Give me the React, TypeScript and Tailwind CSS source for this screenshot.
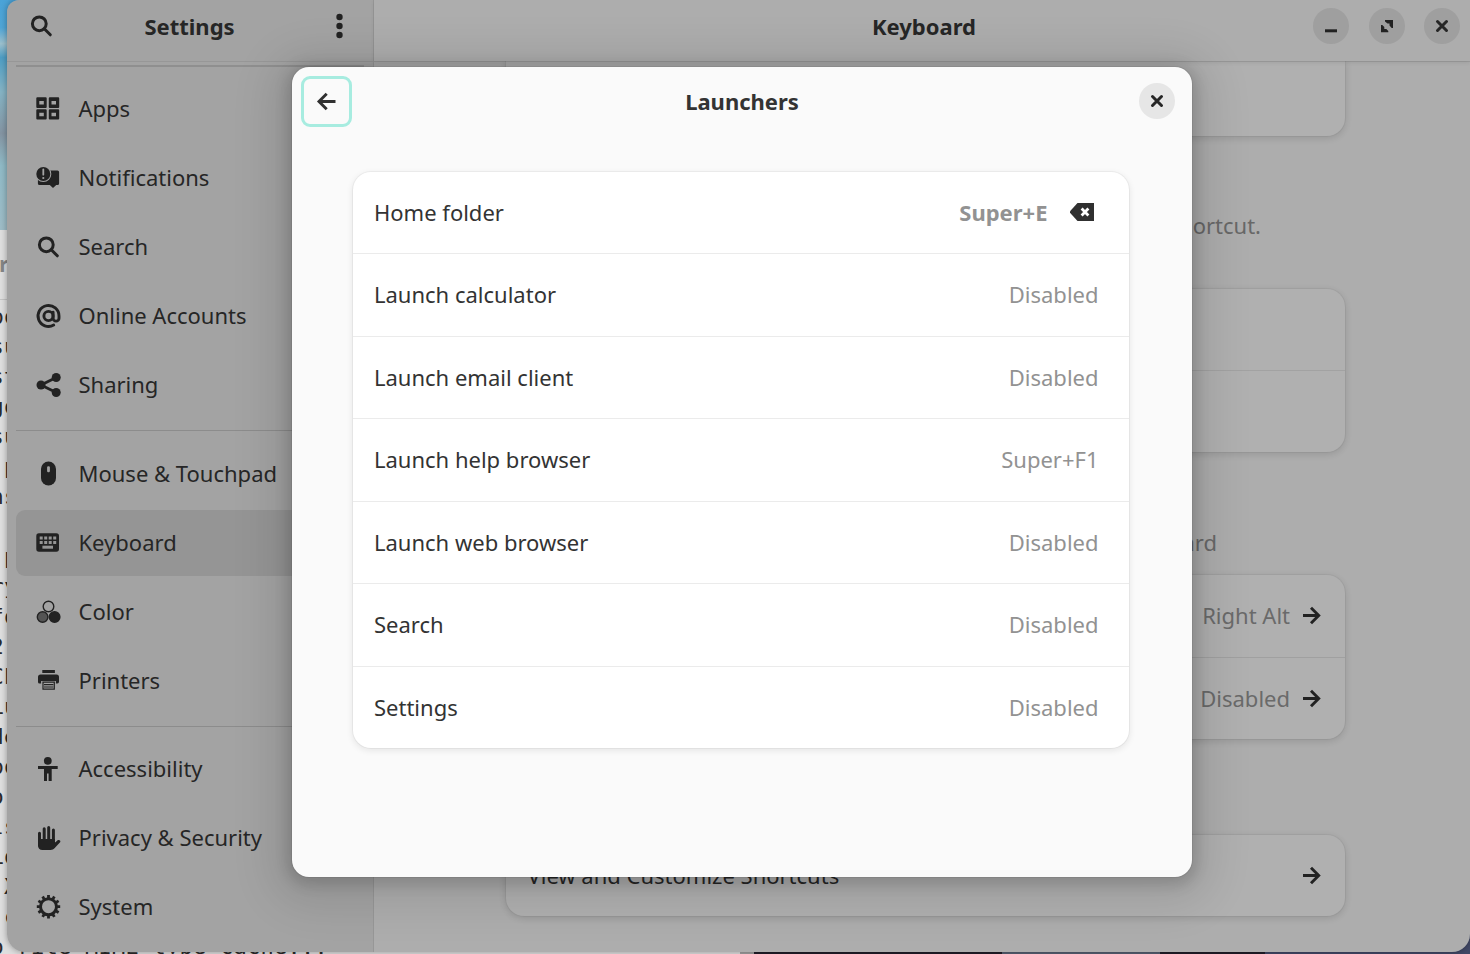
import React from "react";

const ink = "#222222";

const icons: Record<string, React.ReactNode> = {
  apps: (
    <path
      fill={ink}
      fillRule="evenodd"
      d="M1.300.3h8.400a1 1 0 0 1 1 1v8.600a1 1 0 0 1-1 1H1.300a1 1 0 0 1-1-1V1.300a1 1 0 0 1 1-1zM3.300 4v3.500h4.500V4zM13.800.3h8.400a1 1 0 0 1 1 1v8.600a1 1 0 0 1-1 1h-8.400a1 1 0 0 1-1-1V1.300a1 1 0 0 1 1-1zM15.500 4v3.500H20V4zM1.300 12.300h8.400a1 1 0 0 1 1 1v8.200a1 1 0 0 1-1 1H1.300a1 1 0 0 1-1-1v-8.200a1 1 0 0 1 1-1zM3.300 15.800v3.500h4.500v-3.500zM13.800 12.300h8.400a1 1 0 0 1 1 1v8.200a1 1 0 0 1-1 1h-8.400a1 1 0 0 1-1-1v-8.200a1 1 0 0 1 1-1zM15.500 15.800v3.500H20v-3.500z"
    />
  ),
  notifications: (
    <g>
      <path d="M2 4.500h19.500a1.600 1.600 0 0 1 1.600 1.600v11.400a1.600 1.600 0 0 1-1.600 1.600h-1.300l-3.200 3-3.200-3H3.500a1.600 1.600 0 0 1-1.600-1.600z" fill={ink} />
      <circle cx="7.300" cy="8" r="8" fill="#a3a3a3" />
      <circle cx="7.300" cy="8" r="7" fill={ink} />
      <path d="M7.300 3.500v5.200" stroke="#a3a3a3" strokeWidth="1.800" strokeLinecap="round" />
      <circle cx="7.300" cy="12" r="1.100" fill="#a3a3a3" />
    </g>
  ),
  search: (
    <g fill="none" stroke={ink} strokeWidth="3">
      <circle cx="10.300" cy="9.800" r="6.900" />
      <path d="M15.300 14.800l6 6" strokeLinecap="round" />
    </g>
  ),
  online: (
    <g fill="none" stroke={ink} strokeWidth="2.900">
      <circle cx="12.500" cy="12" r="4.600" />
      <path d="M17.100 8.200v6a2.900 2.900 0 0 0 5.900 0V12A10.500 10.500 0 1 0 17.700 21.100" strokeLinecap="round" />
    </g>
  ),
  sharing: (
    <g fill={ink}>
      <path d="M20.200 4.500L5 12l15.200 7.500" fill="none" stroke={ink} strokeWidth="2.800" />
      <circle cx="5" cy="12" r="4.500" />
      <circle cx="20.200" cy="4.500" r="4.500" />
      <circle cx="20.200" cy="19.500" r="4.500" />
    </g>
  ),
  mouse: (
    <g>
      <rect x="5" y="-.5" width="15" height="24" rx="7.500" fill={ink} />
      <rect x="11.100" y="4.300" width="2.800" height="6" rx="1.200" fill="#a3a3a3" />
    </g>
  ),
  keyboard: (
    <g>
      <rect x=".3" y="2.300" width="22.700" height="18.400" rx="2.600" fill={ink} />
      <path d="M3.700 6.900h16.500M3.700 11.600h16.500" stroke="#959595" strokeWidth="3" strokeDasharray="3 1.500" />
      <path d="M6.400 16.200H17" stroke="#959595" strokeWidth="3" />
    </g>
  ),
  color: (
    <g stroke={ink} strokeWidth="1.400">
      <circle cx="12.500" cy="6.500" r="5.300" fill="none" />
      <circle cx="6.600" cy="17" r="5.300" fill="#545454" />
      <circle cx="18.600" cy="17" r="5.300" fill={ink} />
    </g>
  ),
  printers: (
    <g fill={ink}>
      <path d="M6.300 1h12.600v3H6.300z" />
      <path d="M4.500 5.500h16A2.500 2.500 0 0 1 23 8v4.800a1.600 1.600 0 0 1-1.600 1.600h-1.500v-2.300H5.100v2.400H3.600A1.600 1.600 0 0 1 2 12.900V8a2.500 2.500 0 0 1 2.500-2.500z" />
      <path d="M7 13.200h11.300v7H7zM8 15.600h9.300M8 18h9.300" fill="#a3a3a3" stroke={ink} strokeWidth="1.200" />
    </g>
  ),
  accessibility: (
    <g fill={ink}>
      <circle cx="11.800" cy="3.800" r="3.900" />
      <path d="M2 9h19.700v3h-6v12H12.600v-7.500H11V24H8V12H2z" />
    </g>
  ),
  privacy: (
    <g fill={ink}>
      <path d="M3.500 7.300v12M8.200 2.800v12M12.700 1.500v12M17.400 4v14" stroke={ink} strokeWidth="3" strokeLinecap="round" />
      <path d="M2 13h16.900v3.600c1.300-.2 2-2 3.200-2.500 1.500-.5 3 .8 2 2.100L18.500 22.300c-1.200 1.300-2 1.700-4 1.700h-8C3.500 24 2 22 2 19.500z" />
    </g>
  ),
  system: (
    <g fill="none" stroke={ink} transform="translate(.5 -.3)">
      <circle cx="12" cy="12" r="8" strokeWidth="3" />
      <path
        d="M12 .3v3M12 20.700v3M.3 12h3M20.700 12h3M6.150 1.870l1.500 2.600M16.350 19.530l1.500 2.600M17.850 1.870l-1.500 2.600M7.650 19.530l-1.500 2.600M1.870 6.150l2.600 1.500M19.530 16.350l2.600 1.500M1.870 17.850l2.600-1.500M19.530 7.650l2.600-1.500"
        strokeWidth="2.800"
      />
    </g>
  ),
};

function Icon({ name }: { name: string }) {
  return (
    <svg width="24" height="24" viewBox="0 0 24 24" className="shrink-0 overflow-visible">
      {icons[name]}
    </svg>
  );
}

function ArrowRight() {
  return (
    <svg width="18" height="18" viewBox="0 0 18 18" className="shrink-0 overflow-visible">
      <path d="M0 8.500h15.500M8 .8l7.700 7.700L8 16.200" fill="none" stroke={ink} strokeWidth="2.900" />
    </svg>
  );
}

function Cross() {
  return (
    <svg width="36" height="36" viewBox="0 0 36 36">
      <path d="M13.500 13.500l9 9M22.500 13.500l-9 9" stroke="#262626" strokeWidth="3" strokeLinecap="round" />
    </svg>
  );
}

function NavItem({ icon, label, active }: { icon: string; label: string; active?: boolean }) {
  return (
    <div className={`mb-[3px] flex h-[66px] items-center gap-[18.500px] rounded-[9px] pl-[20px] ${active ? "bg-[#959595]" : ""}`}>
      <Icon name={icon} />
      <span className="pb-[2px] whitespace-nowrap">{label}</span>
    </div>
  );
}

function Separator() {
  return <div className="mt-[9px] mb-[9.500px] h-px bg-[#8c8c8c]" />;
}

function Sidebar() {
  return (
    <aside className="flex w-[367px] shrink-0 flex-col border-r border-[#979797] bg-[#a3a3a3]">
      <header className="flex h-[62px] shrink-0 items-center justify-between border-b border-[#979797] pr-[30px] pb-[9px] pl-[22px]">
        <Icon name="search" />
        <h1 className="mr-[10px] font-bold">Settings</h1>
        <svg width="7" height="26" viewBox="0 0 7 26" fill={ink}>
          <circle cx="3.500" cy="4" r="3.200" />
          <circle cx="3.500" cy="13" r="3.200" />
          <circle cx="3.500" cy="22" r="3.200" />
        </svg>
      </header>
      <nav className="flex flex-col px-[9px] pt-[3px]">
        <div className="mb-[9.500px] h-[1.500px] shrink-0 bg-[#8f8f8f]" />
        <NavItem icon="apps" label="Apps" />
        <NavItem icon="notifications" label="Notifications" />
        <NavItem icon="search" label="Search" />
        <NavItem icon="online" label="Online Accounts" />
        <NavItem icon="sharing" label="Sharing" />
        <Separator />
        <NavItem icon="mouse" label="Mouse & Touchpad" />
        <NavItem icon="keyboard" label="Keyboard" active />
        <NavItem icon="color" label="Color" />
        <NavItem icon="printers" label="Printers" />
        <Separator />
        <NavItem icon="accessibility" label="Accessibility" />
        <NavItem icon="privacy" label="Privacy & Security" />
        <NavItem icon="system" label="System" />
      </nav>
    </aside>
  );
}

function WindowButton({ children }: { children: React.ReactNode }) {
  return <div className="size-9 rounded-full bg-[#9f9f9f]">{children}</div>;
}

function KeyboardPage() {
  const card = "rounded-[18px] bg-[#b0b0b0] shadow-[0_0_0_1px_rgba(0,0,0,0.04),0_2px_6px_1px_rgba(0,0,0,0.11)]";
  return (
    <main className="flex min-w-0 flex-1 flex-col bg-[#adadad]">
      <header className="z-10 grid h-[61px] shrink-0 grid-cols-[1fr_auto_1fr] items-center bg-[#adadad] pr-[10px] pb-[9px] pl-[14px] shadow-[0_1px_0_rgba(0,0,0,0.09),0_2px_4px_rgba(0,0,0,0.08)]">
        <span />
        <h2 className="pb-px font-bold">Keyboard</h2>
        <div className="flex justify-end gap-[19.500px]">
          <WindowButton>
            <svg width="36" height="36" viewBox="0 0 36 36">
              <path d="M12 21.300h12v3H12z" transform="translate(0 7.500)" fill="none" />
              <path d="M12 21.300h12v3H12z" transform="translate(0 7.500) translate(0 -7.500)" fill={ink} />
            </svg>
          </WindowButton>
          <WindowButton>
            <svg width="36" height="36" viewBox="0 0 36 36" fill={ink}>
              <path d="M16 12h8v8h-1.300L20.500 17.500v-2h-2L16 13.500z" />
              <path d="M12 17h1.300l2 2v2h2l2 2v1.300H12z" />
            </svg>
          </WindowButton>
          <WindowButton>
            <Cross />
          </WindowButton>
        </div>
      </header>
      <div className="ml-[132px] flex w-[839px] flex-col self-start">
        <section className={`${card} h-[75px] shrink-0 rounded-t-none`} />
        <p className="mt-[74px] h-[30px] pr-[84px] text-right leading-[30px] text-[#686868]">
          Hold down and type to enter different characters with the shortcut.
        </p>
        <section className={`${card} mt-[49px] h-[163px]`}>
          <div className="h-[82px] border-b border-[#a2a2a2]" />
        </section>
        <p className="mt-[75px] h-[30px] pr-[128px] text-right leading-[30px] text-[#686868]">
          Enter symbols and letters using the keyboard
        </p>
        <section className={`${card} mt-[18px] flex h-[164px] flex-col text-[#6a6a6a]`}>
          <div className="flex h-[83px] items-center justify-end gap-[13px] border-b border-[#a0a0a0] pr-[24px]">
            <span className="pb-[2px]">Right Alt</span>
            <ArrowRight />
          </div>
          <div className="flex flex-1 items-center justify-end gap-[13px] pr-[24px]">
            <span className="pb-[2px]">Disabled</span>
            <ArrowRight />
          </div>
        </section>
        <section className={`${card} mt-[96px] flex h-[81px] items-center justify-between pr-[24px] pl-[21.500px]`}>
          <span className="pb-[2px]">View and Customize Shortcuts</span>
          <ArrowRight />
        </section>
      </div>
    </main>
  );
}

const launchers = [
  { name: "Home folder", keys: "Super+E", custom: true },
  { name: "Launch calculator", keys: "Disabled" },
  { name: "Launch email client", keys: "Disabled" },
  { name: "Launch help browser", keys: "Super+F1" },
  { name: "Launch web browser", keys: "Disabled" },
  { name: "Search", keys: "Disabled" },
  { name: "Settings", keys: "Disabled" },
];

function LaunchersDialog() {
  return (
    <div className="absolute top-[67px] left-[292px] z-20 flex h-[810px] w-[900px] flex-col rounded-[17px] bg-[#fafafa] text-[#333333] shadow-[0_0_0_1px_rgba(0,0,0,0.06),0_3px_14px_5px_rgba(0,0,0,0.14),0_7px_42px_21px_rgba(0,0,0,0.1)]">
      <header className="grid h-[69px] shrink-0 grid-cols-[1fr_auto_1fr] items-center pr-[17px] pl-[9px]">
        <button className="flex size-[51px] items-center justify-center rounded-[9px] border-[3px] border-[#a7ece0]">
          <svg width="18" height="18" viewBox="0 0 18 18" className="overflow-visible">
            <path d="M17.500 8.500h-16M8.700.8L1 8.500l7.700 7.700" fill="none" stroke="#303030" strokeWidth="2.900" />
          </svg>
        </button>
        <h2 className="pb-[2px] pl-[8px] font-bold">Launchers</h2>
        <button className="mb-px size-9 justify-self-end rounded-full bg-[#e6e6e6]">
          <Cross />
        </button>
      </header>
      <ul className="mt-[36px] mr-[63px] ml-[61px] flex h-[576px] flex-col rounded-[18px] bg-white shadow-[0_0_0_1px_rgba(0,0,0,0.04),0_2px_6px_1px_rgba(0,0,0,0.08)]">
        {launchers.map((l) => (
          <li
            key={l.name}
            className="flex h-[82.500px] shrink-0 items-center justify-between border-b border-[#ebebeb] pr-[30.500px] pb-[0.400px] pl-[21px] first:h-[82px] last:h-[81.500px] last:border-b-0"
          >
            <span className="pb-px">{l.name}</span>
            {l.custom ? (
              <span className="flex items-center gap-[22.500px] pr-[4.500px] font-bold text-[#929292]">
                <span className="pb-px">{l.keys}</span>
                <svg width="24" height="18" viewBox="0 0 24 18">
                  <path d="M7.500 0H24v18H7.500L0 9.800V8.200z" fill="#303030" />
                  <path d="M11.600 5.600l6.800 6.800M18.400 5.600l-6.800 6.800" stroke="#fff" strokeWidth="2.800" />
                </svg>
              </span>
            ) : (
              <span className="pb-px text-[#929292]">{l.keys}</span>
            )}
          </li>
        ))}
      </ul>
    </div>
  );
}

const terminal = ["po", "su", "st", "go", "su", " p", "ns", "", " p", "ry", "fo", "2 ", "Ch", "Lu", "de", "po", "or", "ls", "Lo", " X", " c", "o rite MIME type cache..."];

function Desktop() {
  return (
    <div className="absolute inset-0 flex flex-col overflow-hidden bg-[#dedede]">
      <div className="h-[230px] shrink-0 bg-[linear-gradient(180deg,#4aa3d8_0%,#4fa5d6_12%,#9cc0cd_19%,#4e9dc4_25%,#85b3c4_40%,#8494a2_58%,#8fbac6_72%,#9ebcc6_100%)]" />
      <div className="flex h-[70px] shrink-0 items-center border-b border-[#c4c4c4] pb-[3px] font-bold text-[#868686]">
        <span className="-ml-[1px]">r</span>
      </div>
      <div className="-ml-[9.500px] pt-[2px] font-['DejaVu_Sans_Mono',monospace] text-[22px] leading-[30px] tracking-[0.250px] text-[#2a2a2a]">
        {terminal.map((line, i) => (
          <div key={i} className="h-[30px] whitespace-pre">
            {line}
          </div>
        ))}
      </div>
      <div className="absolute bottom-0 left-[740px] flex h-[20px] w-[730px]">
        <div className="w-[14px] bg-[#a0a0a0]" />
        <div className="w-[248px] bg-[#211e29]" />
        <div className="w-[158px] bg-[#566072]" />
        <div className="w-[105px] bg-[#211e29]" />
        <div className="flex-1 bg-[#424967]" />
      </div>
    </div>
  );
}

export default function App() {
  return (
    <div className="relative h-[954px] w-[1470px] overflow-hidden font-['Noto_Sans',sans-serif] text-[22px] leading-[30px] text-[#262626]">
      <Desktop />
      <div className="relative flex h-[952px] pl-[7px]">
        <div className="flex flex-1 overflow-hidden rounded-tl-[12px] rounded-b-[18px] shadow-[0_0_6px_rgba(0,0,0,0.35)]">
          <Sidebar />
          <KeyboardPage />
        </div>
      </div>
      <LaunchersDialog />
    </div>
  );
}
